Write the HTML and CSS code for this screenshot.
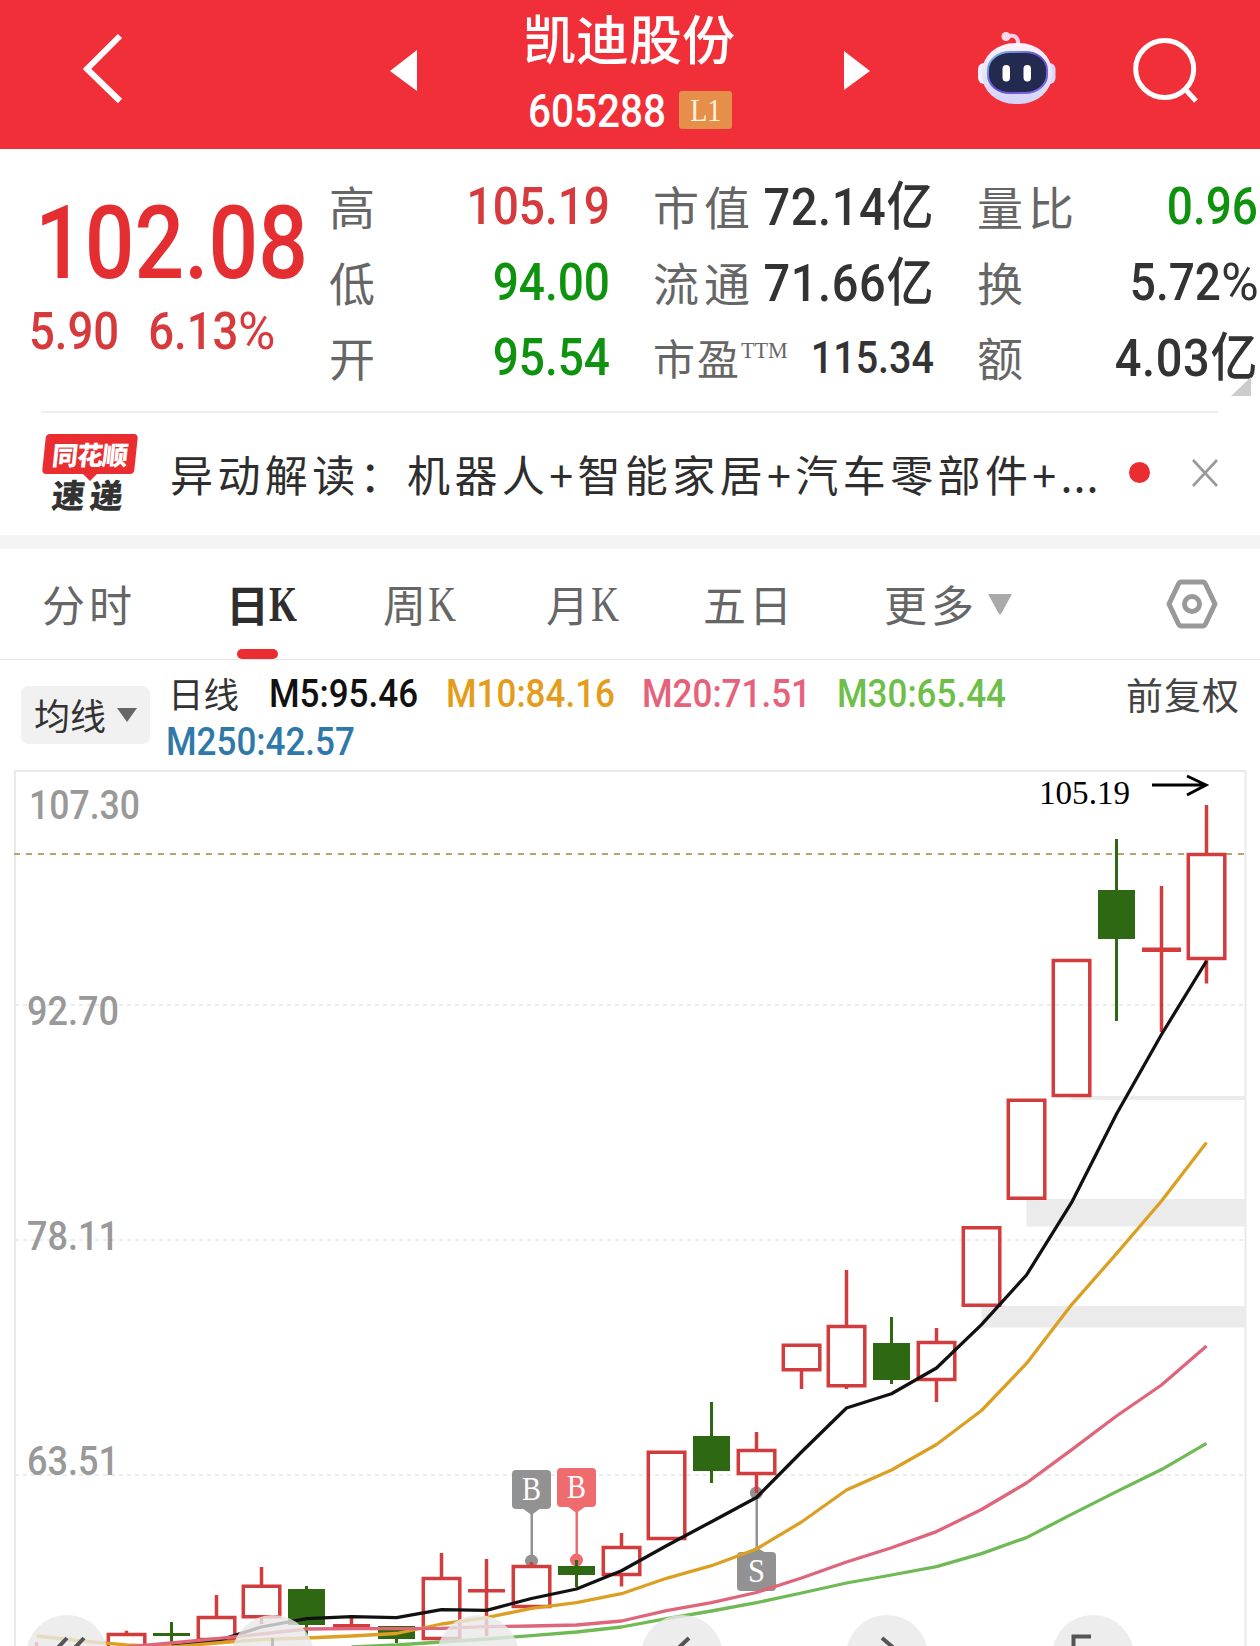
FILE: index.html
```html
<!DOCTYPE html>
<html lang="zh-CN">
<head>
<meta charset="utf-8">
<title>凯迪股份 605288</title>
<link rel="stylesheet" href="styles.css">
</head>
<body>
<header class="topbar">
  <svg class="back" width="46" height="76" viewBox="0 0 46 76"><path d="M40 5 7 38 40 70" fill="none" stroke="#fff" stroke-width="6"/></svg>
  <svg class="prev" width="28" height="42" viewBox="0 0 28 42"><path d="M0 21 27 0V41Z" fill="#fff"/></svg>
  <div class="heading">
    <h1>凯迪股份</h1>
    <div class="code"><span class="num">605288</span><span class="level"><i>L1</i></span></div>
  </div>
  <svg class="next" width="28" height="42" viewBox="0 0 28 42"><path d="M0 1 26 21 0 40Z" fill="#fff"/></svg>
  <svg class="robot" width="80" height="76" viewBox="976 30 80 76">
    <defs>
      <linearGradient id="shell" x1="0" y1="0" x2="0" y2="1"><stop offset="0" stop-color="#fdf3fb"/><stop offset="1" stop-color="#d3d3f8"/></linearGradient>
      <linearGradient id="rim" x1="0" y1="0" x2="1" y2="1"><stop offset="0" stop-color="#7cc7ee"/><stop offset=".5" stop-color="#6547cf"/><stop offset="1" stop-color="#8571e8"/></linearGradient>
    </defs>
    <path d="M1007 37C1014 34 1019 37 1018 45" fill="none" stroke="#f6cfe4" stroke-width="4"/>
    <circle cx="1006" cy="36.500" r="4.500" fill="#fbd9ea"/>
    <rect x="978" y="63" width="14" height="21" rx="6" fill="#f3eefd"/>
    <rect x="1041" y="63" width="14.500" height="21" rx="6" fill="#dcd5fb"/>
    <rect x="982" y="43" width="70" height="61" rx="33" ry="29" fill="url(#shell)"/>
    <rect x="988" y="52" width="59" height="41" rx="22" ry="18" fill="#222b4f" stroke="url(#rim)" stroke-width="2"/>
    <rect x="1002.500" y="65" width="7.500" height="16.500" rx="3.700" fill="#fff"/>
    <rect x="1023.500" y="65" width="7.500" height="16.500" rx="3.700" fill="#fff"/>
  </svg>
  <svg class="search" width="70" height="72" viewBox="1130 35 70 72"><g fill="none" stroke="#fff" stroke-width="5"><ellipse cx="1164.700" cy="69" rx="29" ry="28.500"/><path d="M1185 89 1196 101"/></g></svg>
</header>

<section class="quote">
  <div class="last">
    <div class="price"><span>102.08</span></div>
    <div class="change"><span class="num">5.90</span><span class="num">6.13<small>%</small></span></div>
  </div>
  <dl class="col c1">
    <dt>高</dt><dd class="up">105.19</dd>
    <dt>低</dt><dd class="down">94.00</dd>
    <dt>开</dt><dd class="down">95.54</dd>
  </dl>
  <dl class="col c2">
    <dt>市值</dt><dd class="wide">72.14亿</dd>
    <dt>流通</dt><dd class="wide">71.66亿</dd>
    <dt class="small">市盈<sup>TTM</sup></dt><dd class="small">115.34</dd>
  </dl>
  <dl class="col c3">
    <dt>量比</dt><dd class="down">0.96</dd>
    <dt>换</dt><dd>5.72<small>%</small></dd>
    <dt>额</dt><dd class="wide">4.03亿</dd>
  </dl>
  <i class="corner"></i>
</section>

<section class="news">
  <div class="brand"><div class="bubble"><b>同花顺</b></div><div class="sub">速递</div></div>
  <p>异动解读：机器人+智能家居+汽车零部件+<span class="dots">...</span></p>
  <i class="dot"></i>
  <svg class="close" width="26" height="28" viewBox="0 0 26 28"><path d="M1 1 25 27M25 1 1 27" stroke="#999" stroke-width="2.600"/></svg>
</section>

<nav class="tabs">
  <span class="t1">分时</span>
  <span class="t2 active">日<i>K</i></span>
  <span class="t3">周<i>K</i></span>
  <span class="t4">月<i>K</i></span>
  <span class="t5">五日</span>
  <span class="t6">更多</span>
  <svg class="caret" width="24" height="21" viewBox="0 0 24 21"><path d="M1 0H23Q24 0 23.500 1L13 20Q12 21 11 20L.5 1Q0 0 1 0Z" fill="#aaa"/></svg>
  <svg class="gear" width="54" height="54" viewBox="0 0 54 54"><g fill="none" stroke="#999" stroke-width="5"><path stroke-linejoin="round" d="M16.500 5H37.500Q39.500 5 40.500 7L50 27 40.500 47Q39.500 49 37.500 49H16.500Q14.500 49 13.500 47L4 27 13.500 7Q14.500 5 16.500 5Z"/><circle cx="27" cy="27" r="7.500"/></g></svg>
</nav>

<section class="legend">
  <div class="picker"><span>均线</span><svg width="20" height="14" viewBox="0 0 20 14"><path d="M0 0H20L10 14Z" fill="#666"/></svg></div>
  <div class="averages">
    <span class="kind">日线</span>
    <span class="num m5">M5:95.46</span>
    <span class="num m10">M10:84.16</span>
    <span class="num m20">M20:71.51</span>
    <span class="num m30">M30:65.44</span>
    <span class="num m250">M250:42.57</span>
  </div>
  <div class="adjust">前复权</div>
</section>

<svg class="chart" width="1260" height="881" viewBox="0 765 1260 881">
  <path d="M15 1646V771H1245.500V1646" fill="none" stroke="#e9e9e9" stroke-width="2"/>
  <g fill="#ebebeb"><path d="M1071 1096h175v4h-175zM1026.500 1199h219.500v27.500h-219.500zM981.500 1306h264.500v21.500h-264.500z"/></g>
  <path d="M15 1005H1245M15 1240H1245M15 1475H1245" stroke="#ececec" stroke-width="2" stroke-dasharray="4 4"/>
  <path d="M14 854H1245" stroke="#b9a26b" stroke-width="2" stroke-dasharray="6 6"/>
  <g class="axis">
    <text x="29" y="0" transform="translate(0 819) scale(1 1.120)" textLength="111" lengthAdjust="spacingAndGlyphs">107.30</text>
    <text x="27" y="0" transform="translate(0 1025) scale(1 1.120)" textLength="92" lengthAdjust="spacingAndGlyphs">92.70</text>
    <text x="27" y="0" transform="translate(0 1250) scale(1 1.120)" textLength="92" lengthAdjust="spacingAndGlyphs">78.11</text>
    <text x="27" y="0" transform="translate(0 1475) scale(1 1.120)" textLength="92" lengthAdjust="spacingAndGlyphs">63.51</text>
  </g>
  <text class="peak" x="1039" y="804" textLength="91" lengthAdjust="spacingAndGlyphs">105.19</text>
  <path d="M1152 785H1206M1187 776 1206 785 1187 795" fill="none" stroke="#000" stroke-width="3"/>

  <!-- buy / sell markers -->
  <g fill="#929292">
    <circle cx="531.500" cy="1561" r="6.500"/><path d="M530.500 1512h2.500v48h-2.500z"/><path d="M522 1508h19l-9.500 7z"/><rect x="512" y="1470" width="39" height="39" rx="4"/>
    <circle cx="756.300" cy="1493" r="6.500"/><path d="M755.500 1495h2.500v55h-2.500z"/><path d="M746 1553h20l-10-6z"/><rect x="737" y="1552" width="39" height="39" rx="4"/>
  </g>
  <g fill="#ee6b6e"><circle cx="576.500" cy="1560" r="6.500"/><path d="M575.500 1510h2.500v48h-2.500z"/><path d="M567 1506h19l-9.500 7z"/><rect x="557" y="1468" width="39" height="39" rx="4"/></g>
  <g class="mark"><text x="522" y="1500" textLength="19" lengthAdjust="spacingAndGlyphs">B</text><text x="567" y="1498" textLength="19" lengthAdjust="spacingAndGlyphs">B</text><text x="748" y="1582" textLength="17" lengthAdjust="spacingAndGlyphs">S</text></g>

  <!-- rising candles -->
  <g fill="none" stroke="#d23c3c" stroke-width="3.500">
    <path d="M1188.300 854.500h36.500v104h-36.500zM1206.500 805v48M1206.500 960v23.500"/>
    <path d="M1161.500 886v146"/><path d="M1142 949.700h39" stroke-width="4.500"/>
    <path d="M1053.300 960.500h36.500v135h-36.500zM1008.300 1100.300h36.500v98h-36.500zM963.300 1227.800h36.500v77.500h-36.500z"/>
    <path d="M918.300 1342.400h36.500v37h-36.500zM936.500 1328v13M936.500 1381v21"/>
    <path d="M828.300 1326.400h36.500v59.300h-36.500zM846.500 1270v55M846.500 1387v2"/>
    <path d="M783.300 1345.300h36.500v24.500h-36.500zM801.500 1371v18"/>
    <path d="M738.300 1450.500h36.500v23h-36.500zM756.500 1432v17M756.500 1475v18"/>
    <path d="M648.300 1452.200h36.500v86.300h-36.500z"/>
    <path d="M603.300 1547.500h36.500v27h-36.500zM621.500 1533v13M621.500 1576v10.500"/>
    <path d="M513.300 1566.500h36.500v40h-36.500zM531.500 1562v3"/>
    <path d="M486.500 1559v77M468 1590.700h37"/>
    <path d="M423.300 1578.500h36.500v60h-36.500zM441.500 1553v24"/>
    <path d="M351.500 1617.700V1630"/><path d="M333 1626.200h37" stroke-width="4.500"/>
    <path d="M243.300 1586.200h36.500v30.500h-36.500zM261.500 1567v18M261.500 1618v6"/>
    <path d="M198.300 1617.500h36.500v22h-36.500zM216.500 1595v21"/>
    <path d="M108.300 1634.500h36.500v20h-36.500zM126.500 1630.700v3M36.500 1642v4"/>
  </g>
  <!-- falling candles -->
  <g fill="#2f6813">
    <path d="M1098 890h37v49h-37zM1115 839h3v182h-3z"/>
    <path d="M873 1343h37v37h-37zM890 1317h3v67h-3z"/>
    <path d="M693 1436h37v35h-37zM710 1402h3v81h-3z"/>
    <path d="M558 1566h37v9h-37zM575 1560h3v27h-3z"/>
    <path d="M378 1626h37v13h-37zM395 1639h3v4h-3z"/>
    <path d="M288 1589h37v36h-37zM305 1586h3v50h-3z"/>
    <path d="M153 1633h37v3h-37zM170 1622h3v20h-3z"/>
  </g>
  <!-- moving averages -->
  <g fill="none" stroke-width="3.300" stroke-linejoin="round">
    <polyline stroke="#6fba55" points="351.500,1647 396.500,1645 441.500,1642 486.500,1639 531.500,1635.700 576.500,1632 621.500,1627 666.500,1618.700 711.500,1611 756.500,1602.700 801.500,1593 846.500,1583 891.500,1575 936.500,1566.700 981.500,1553.600 1026.500,1537.600 1071.500,1514.400 1116.500,1491.600 1161.500,1469.600 1206.500,1443.400"/>
    <polyline stroke="#111" points="171.500,1646 216.500,1641 261.500,1627 306.500,1618.700 351.500,1616.700 396.500,1617.700 441.500,1609.700 486.500,1610.300 531.500,1598.500 576.500,1589 621.500,1570.700 666.500,1545.700 711.500,1521.700 756.500,1497.500 801.500,1452 846.500,1408 891.500,1393.700 936.500,1368 981.500,1324.600 1026.500,1275 1071.500,1202.700 1116.500,1114 1161.500,1034.500 1206.500,961"/>
    <polyline stroke="#dba023" points="36.500,1636 81.500,1641 126.500,1645 171.500,1647 216.500,1643 261.500,1639.500 306.500,1638 351.500,1636 396.500,1633.500 441.500,1624 486.500,1617.700 531.500,1608.300 576.500,1602.700 621.500,1593.700 666.500,1578.300 711.500,1565.700 756.500,1549 801.500,1522 846.500,1490 891.500,1470 936.500,1444.500 981.500,1410.500 1026.500,1363.400 1071.500,1304.800 1116.500,1253.600 1161.500,1201 1206.500,1142.600"/>
    <polyline stroke="#df657a" points="126.500,1647 171.500,1643 216.500,1638.700 261.500,1634 306.500,1629 351.500,1628.700 396.500,1628.700 441.500,1628.300 486.500,1626.700 531.500,1626 576.500,1625 621.500,1621 666.500,1610.700 711.500,1602.700 756.500,1592.500 801.500,1578 846.500,1562 891.500,1547.700 936.500,1531.600 981.500,1509.500 1026.500,1483 1071.500,1449.800 1116.500,1416 1161.500,1385 1206.500,1345.900"/>
  </g>
  <!-- floating controls -->
  <g fill="#e9e9e9" fill-opacity=".8">
    <circle cx="67" cy="1656" r="41"/><circle cx="273" cy="1656" r="41"/><circle cx="478" cy="1656" r="41"/><circle cx="682" cy="1656" r="41"/><circle cx="887" cy="1656" r="41"/><circle cx="1093" cy="1656" r="41"/>
  </g>
  <g fill="none" stroke="#555" stroke-width="4">
    <path d="M67 1638 51 1655M84 1638 68 1655M689 1638 671 1655M882 1638 902 1655M1091 1636.600H1073.500V1650"/>
    <path d="M272.500 1638V1650" stroke="#bdbdbd" stroke-width="3"/>
  </g>
</svg>
</body>
</html>
```
FILE: styles.css
```css
* { box-sizing: border-box; }
body {
  margin: 0;
  width: 1260px;
  height: 1646px;
  overflow: hidden;
  background: #fff;
  color: #333;
  font-family: Roboto, "Noto Sans CJK SC", sans-serif;
}
svg { display: block; flex: none; }
i, b { font-style: normal; }
.num { display: inline-block; transform: scaleY(1.12); font-weight: 500; }

.topbar { display: flex; align-items: flex-start; height: 149px; background: #f12f38; color: #fff; }
.back { margin: 31px 0 0 80px; }
.prev { margin: 50px 0 0 264px; }
.heading { width: 212px; margin-left: 105px; }
h1 { margin: 0; height: 76px; font: 500 53px/74px "Noto Sans CJK SC", sans-serif; white-space: nowrap; }
.code { display: flex; align-items: center; height: 70px; padding-left: 5px; font-size: 40.500px; line-height: 70px; }
.level {
  display: flex; align-items: center; justify-content: center;
  width: 53px; height: 38px; margin: -2px 0 0 13px; border-radius: 3px;
  background: #e58f4a; color: #fff4dc;
}
.level i { font: 32px/38px "Liberation Serif", serif; transform: scaleX(.88); }
.next { margin: 50px 0 0 109px; }
.robot { margin: 30px 0 0 104px; }
.search { margin: 35px 0 0 74px; }

.quote { position: relative; display: flex; height: 262px; padding-top: 20px; }
.last { width: 329px; }
.price { height: 112px; padding: 18px 0 0 35px; font-size: 87.500px; line-height: 112px; font-weight: 500; color: #e52e31; }
.price span { display: inline-block; transform: scaleY(1.16); }
.change { display: flex; gap: 29px; padding: 5px 0 0 29px; height: 92px; line-height: 92px; font-size: 45.500px; color: #d63a3c; }
small { display: inline-block; font-size: inherit; font-weight: 400; width: 37px; transform: scaleX(1.12); transform-origin: 0 50%; text-align: left; }
.col { display: grid; margin: 0; height: 227px; grid-template-rows: repeat(3, 75.600px); line-height: 75.600px; }
.c1 { width: 281px; grid-template-columns: 60px 1fr; }
.c2 { width: 281px; margin-left: 43px; grid-template-columns: 106px 1fr; }
.c3 { width: 281px; margin-left: 43px; grid-template-columns: 110px 1fr; }
dt { padding-top: 3px; font-size: 46px; letter-spacing: 5px; color: #666; white-space: nowrap; }
dd { margin: 0; font-size: 46px; font-weight: 500; text-align: right; transform: scaleY(1.12); white-space: nowrap; }
dd.wide { font-size: 47px; letter-spacing: .6px; }
dt.small { font-size: 42px; letter-spacing: 2px; }
dd.small { font-size: 39.500px; }
dt sup { display: inline-block; font: 24px/24px "Liberation Serif", serif; letter-spacing: 0; vertical-align: 17px; transform: scaleX(.92); transform-origin: 0 50%; }
.up { color: #d63a3c; }
.down { color: #0f930f; }
.corner { position: absolute; right: 9px; bottom: 15px; width: 20px; height: 19px; background: #ccc; clip-path: polygon(100% 0, 100% 100%, 0 100%); }

.news { display: flex; align-items: flex-start; height: 138px; border-bottom: 14px solid #f4f4f4; position: relative; }
.news::before { content: ""; position: absolute; left: 41px; right: 42px; top: 0; height: 2px; background: #eee; }
.brand { width: 96px; margin: 23px 0 0 42px; }
.bubble { position: relative; height: 40px; text-align: center; color: #fff; }
.bubble::before { content: ""; position: absolute; inset: 0 2px; border-radius: 4px; background: #e92d31; transform: skewX(-6deg); }
.bubble::after { content: ""; position: absolute; left: 40px; top: 39px; width: 16px; height: 8px; background: #e92d31; clip-path: polygon(0 0, 100% 0, 50% 100%); }
.bubble b { position: relative; display: block; font: 900 26px/40px "Noto Sans CJK SC", sans-serif; letter-spacing: -1px; transform: skewX(-6deg); }
.sub { height: 42px; padding-left: 10px; font: 900 33px/40px "Noto Sans CJK SC", sans-serif; letter-spacing: 5px; transform: skewX(-6deg); white-space: nowrap; }
.news p { width: 940px; margin: 22px 0 0 32px; font: 43px/80px "Noto Sans CJK SC", sans-serif; letter-spacing: 4.400px; white-space: nowrap; color: #2e2e2e; }
.dots { letter-spacing: 1px; }
.dot { width: 21px; height: 21px; margin: 51px 0 0 19px; border-radius: 50%; background: #e92d31; }
.close { margin: 48px 0 0 42px; }

.tabs { display: flex; height: 111px; border-bottom: 1.500px solid #e6e6e6; font-size: 43px; line-height: 117px; color: #666; white-space: nowrap; }
.tabs i { display: inline-block; font-family: "Liberation Serif", serif; font-size: 50px; line-height: 50px; width: 28px; transform: scaleX(.78); transform-origin: 0 50%; vertical-align: 1px; }
.tabs span { flex: none; }
.t1 { width: 184px; margin-left: 42px; letter-spacing: 4px; }
.t2 { position: relative; width: 157px; }
.tabs .t2 i { transform: scaleX(.72); }
.t3 { width: 163px; letter-spacing: 2px; }
.t4 { width: 157px; letter-spacing: 2px; }
.t5 { width: 181px; letter-spacing: 3px; }
.t6 { width: 104px; letter-spacing: 4px; }
.active { color: #2e2e2e; font-weight: 700; }
.active::after { content: ""; position: absolute; left: 11px; bottom: 0; width: 41px; height: 10px; border-radius: 5px; background: #e92d31; }
.caret { margin-top: 45px; }
.gear { margin: 28px 0 0 153px; }

.legend { display: flex; height: 105px; }
.picker { display: flex; align-items: center; gap: 11px; width: 129px; height: 58px; margin: 26px 0 0 21px; padding-left: 13px; border-radius: 7px; background: #f1f1f1; font-size: 36px; line-height: 58px; white-space: nowrap; }
.picker span { padding-top: 5px; }
.averages { display: flex; flex-wrap: wrap; align-content: flex-start; width: 900px; padding: 11px 0 0 19px; font-size: 35px; line-height: 48px; }
.averages .num { transform: scaleY(1.1); }
.kind { width: 100px; font-size: 35.500px; position: relative; top: 1px; text-indent: -1px; }
.m5 { width: 177px; color: #111; }
.m10 { width: 196px; color: #e49c1a; }
.m20 { width: 195px; color: #e6617a; }
.m30 { width: 185px; color: #6dbf49; }
.m250 { margin-left: -3px; color: #2f78aa; }
.adjust { width: 120px; margin: 14px 0 0 76px; font-size: 37px; line-height: 48px; letter-spacing: 1px; white-space: nowrap; color: #444; }

.axis { font: 500 36px Roboto, sans-serif; fill: #999; }
.peak { font: 33px "Liberation Serif", serif; fill: #000; }
.mark { font: 33px "Liberation Serif", serif; fill: #fff; }
```
